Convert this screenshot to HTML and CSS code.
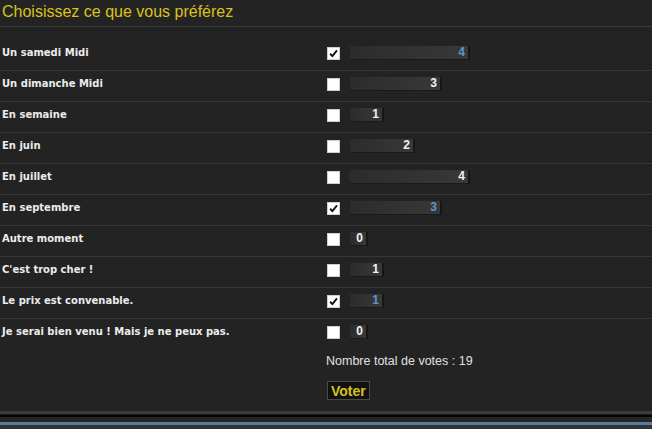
FILE: index.html
```html
<!DOCTYPE html>
<html lang="fr">
<head>
<meta charset="utf-8">
<title>Sondage</title>
<link rel="stylesheet" href="styles.css">
</head>
<body>
<form class="poll">
  <h2 class="poll-title">Choisissez ce que vous préférez</h2>
  <div class="options">
    <div class="row"><span class="label">Un samedi Midi</span><span class="box checked"><svg viewBox="0 0 13 13"><path d="M2.5 6.8 L5.2 9.6 L10.6 2.8" /></svg></span><span class="bar voted" style="width:120px">4</span></div>
    <div class="row"><span class="label">Un dimanche Midi</span><span class="box"></span><span class="bar" style="width:92px">3</span></div>
    <div class="row"><span class="label">En semaine</span><span class="box"></span><span class="bar" style="width:34px">1</span></div>
    <div class="row"><span class="label">En juin</span><span class="box"></span><span class="bar" style="width:65px">2</span></div>
    <div class="row"><span class="label">En juillet</span><span class="box"></span><span class="bar" style="width:120px">4</span></div>
    <div class="row"><span class="label">En septembre</span><span class="box checked"><svg viewBox="0 0 13 13"><path d="M2.5 6.8 L5.2 9.6 L10.6 2.8" /></svg></span><span class="bar voted" style="width:92px">3</span></div>
    <div class="row"><span class="label">Autre moment</span><span class="box"></span><span class="bar" style="width:18px">0</span></div>
    <div class="row"><span class="label">C'est trop cher !</span><span class="box"></span><span class="bar" style="width:34px">1</span></div>
    <div class="row"><span class="label">Le prix est convenable.</span><span class="box checked"><svg viewBox="0 0 13 13"><path d="M2.5 6.8 L5.2 9.6 L10.6 2.8" /></svg></span><span class="bar voted" style="width:34px">1</span></div>
    <div class="row last"><span class="label">Je serai bien venu ! Mais je ne peux pas.</span><span class="box"></span><span class="bar" style="width:18px">0</span></div>
  </div>
  <div class="footer">
    <p class="total">Nombre total de votes : 19</p>
    <button type="button" class="vote">Voter</button>
  </div>
</form>
<div class="bottom">
  <div class="b-light"></div>
  <div class="b-dark"></div>
  <div class="b-black"></div>
  <div class="b-gap"></div>
  <div class="b-blue"></div>
  <div class="b-rest"></div>
</div>
</body>
</html>
```
FILE: styles.css
```css
html, body {
  margin: 0;
  padding: 0;
  background: #222222;
  font-family: "Liberation Sans", Arial, sans-serif;
  color: #e8e8e8;
}
.poll {
  margin: 0;
  height: 411px;
  background: #232323;
  display: flex;
  flex-direction: column;
}
.poll-title {
  margin: 0;
  height: 26px;
  padding-left: 2px;
  box-sizing: content-box;
  font-size: 16px;
  line-height: 24px;
  font-weight: normal;
  color: #dcc01c;
  border-bottom: 1px solid #3a3a3a;
}
.options {
  padding-top: 13px;
  display: flex;
  flex-direction: column;
}
.row {
  display: grid;
  grid-template-columns: 315px 13px 1fr;
  column-gap: 10px;
  height: 30px;
  border-bottom: 1px solid #383838;
  padding-left: 2px;
  align-items: start;
}
.row.last {
  border-bottom: none;
}
.label {
  margin-top: 6px;
  font-family: "DejaVu Sans", Verdana, sans-serif;
  font-size: 10px;
  line-height: 14px;
  font-weight: bold;
  color: #ececec;
}
.box {
  margin-top: 7px;
  width: 13px;
  height: 13px;
  box-sizing: border-box;
  background: #ffffff;
  border: 1px solid #cfcfcf;
  display: block;
}
.box svg {
  display: block;
  width: 11px;
  height: 11px;
}
.box path {
  fill: none;
  stroke: #111111;
  stroke-width: 2.2;
}
.bar {
  margin-top: 6px;
  height: 14px;
  box-sizing: border-box;
  display: block;
  background: linear-gradient(to right, #2c2c2c, #383838);
  border-right: 2px solid #161616;
  border-bottom: 1px solid #1a1a1a;
  text-align: right;
  padding-right: 3px;
  font-size: 12px;
  line-height: 13px;
  font-weight: bold;
  color: #f2f2f2;
}
.bar.voted {
  color: #5f94cf;
}
.footer {
  padding-left: 326px;
  display: flex;
  flex-direction: column;
  align-items: flex-start;
}
.total {
  margin: 5px 0 0 0;
  font-size: 12.5px;
  line-height: 14px;
  color: #e0e0e0;
}
.vote {
  margin-top: 13px;
  margin-left: 1px;
  height: 19px;
  padding: 0 3px;
  background: #111111;
  border: 1px solid #4a4a4a;
  font-family: "Liberation Sans", Arial, sans-serif;
  font-size: 14px;
  line-height: 16px;
  font-weight: bold;
  color: #d8c21e;
}
.bottom {
  display: flex;
  flex-direction: column;
}
.b-light { height: 3px; background: #3b3b3b; }
.b-dark { height: 1px; background: #1b1b1b; }
.b-black { height: 2px; background: #050505; }
.b-gap { height: 5px; background: #262626; }
.b-blue { height: 3px; background: #5a7c9c; }
.b-rest { height: 10px; background: #333333; }
```
